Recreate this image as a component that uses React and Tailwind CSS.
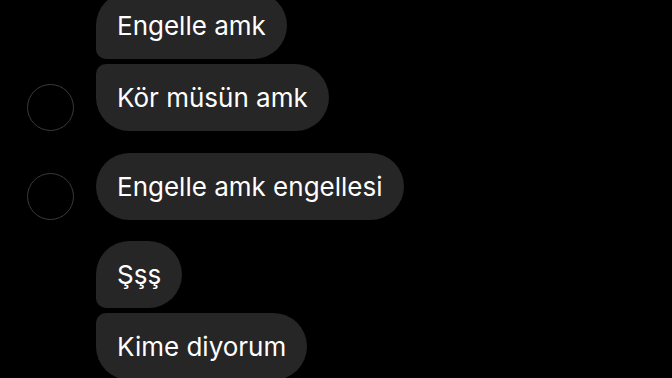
export default function App() {
  const font = { fontFamily: 'Inter, "Liberation Sans", sans-serif' };
  const Bubble = ({ children, cls }) => (
    <div
      className={`h-[67px] flex items-center px-[21px] bg-[#262626] text-white text-[26px] leading-none whitespace-nowrap ${cls}`}
      style={font}
    >
      {children}
    </div>
  );
  const Avatar = ({ show }) => (
    <div className="w-[47px] h-[47px] shrink-0">
      {show && <div className="w-[47px] h-[47px] rounded-full border border-[#3a3a3a]" />}
    </div>
  );
  const Row = ({ avatar, children, cls = "" }) => (
    <div className={`flex items-end gap-[22px] ${cls}`}>
      <Avatar show={avatar} />
      {children}
    </div>
  );
  return (
    <div className="w-[672px] h-[378px] bg-black overflow-hidden">
      <div className="flex flex-col pl-[27px] -mt-[8px]">
        <Row>
          <Bubble cls="rounded-r-[34px] rounded-tl-[34px] rounded-bl-[10px]">Engelle amk</Bubble>
        </Row>
        <Row avatar cls="mt-[5px]">
          <Bubble cls="rounded-r-[34px] rounded-bl-[34px] rounded-tl-[10px]">Kör müsün amk</Bubble>
        </Row>
        <Row avatar cls="mt-[22px]">
          <Bubble cls="rounded-[34px]">Engelle amk engellesi</Bubble>
        </Row>
        <Row cls="mt-[21px]">
          <Bubble cls="rounded-r-[34px] rounded-tl-[34px] rounded-bl-[10px]">Şşş</Bubble>
        </Row>
        <Row cls="mt-[5px]">
          <Bubble cls="rounded-r-[34px] rounded-bl-[34px] rounded-tl-[10px]">Kime diyorum</Bubble>
        </Row>
      </div>
    </div>
  );
}
